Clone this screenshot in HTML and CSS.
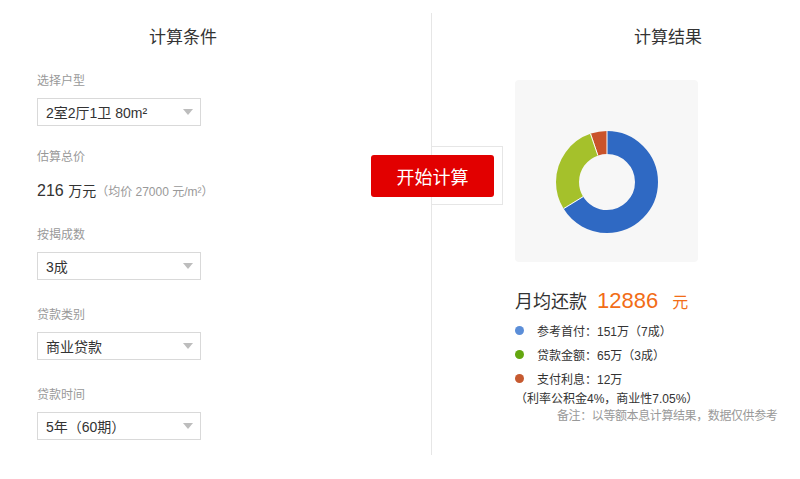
FILE: index.html
```html
<!DOCTYPE html>
<html lang="zh-CN">
<head>
<meta charset="utf-8">
<title>房贷计算</title>
<link rel="stylesheet" href="styles.css">
</head>
<body>
<div class="page">
  <section class="col left">
    <h2 class="title">计算条件</h2>
    <div class="field">
      <div class="label">选择户型</div>
      <div class="select"><span>2室2厅1卫 80m²</span><i class="arrow"></i></div>
    </div>
    <div class="field">
      <div class="label">估算总价</div>
      <div class="price"><span class="num">216</span> <span class="unit">万元</span><span class="avg">（均价 27000 元/m²）</span></div>
    </div>
    <div class="field f3">
      <div class="label">按揭成数</div>
      <div class="select"><span>3成</span><i class="arrow"></i></div>
    </div>
    <div class="field loose">
      <div class="label">贷款类别</div>
      <div class="select"><span>商业贷款</span><i class="arrow"></i></div>
    </div>
    <div class="field loose">
      <div class="label">贷款时间</div>
      <div class="select"><span>5年（60期）</span><i class="arrow"></i></div>
    </div>
  </section>
  <section class="col right">
    <h2 class="title rtitle">计算结果</h2>
    <div class="card">
      <svg class="donut" width="104" height="104" viewBox="0 0 104 104">
        <g transform="rotate(-90 52 52)" fill="none" stroke-width="23">
          <circle cx="52" cy="52" r="39.5" stroke="#2f69c3" stroke-dasharray="164.4 248.2"/>
          <circle cx="52" cy="52" r="39.5" stroke="#a5c12b" stroke-dasharray="70.75 248.2" stroke-dashoffset="-164.4"/>
          <circle cx="52" cy="52" r="39.5" stroke="#c9532b" stroke-dasharray="13.06 248.2" stroke-dashoffset="-235.15"/>
        </g>
        <g stroke="#ffffff" stroke-width="1">
          <line x1="52" y1="24" x2="52" y2="0.5"/>
          <line x1="28.15" y1="66.67" x2="8.56" y2="78.72"/>
          <line x1="42.91" y1="25.52" x2="35.44" y2="3.76"/>
        </g>
      </svg>
    </div>
    <div class="monthly"><span class="mlabel">月均还款</span><span class="mnum">12886</span><span class="munit">元</span></div>
    <ul class="legend">
      <li><i class="dot blue"></i>参考首付：151万（7成）</li>
      <li><i class="dot green"></i>贷款金额：65万（3成）</li>
      <li><i class="dot orange"></i>支付利息：12万</li>
    </ul>
    <div class="rate">（利率公积金4%，商业性7.05%）</div>
    <div class="note">备注：以等额本息计算结果，数据仅供参考</div>
  </section>
  <div class="calc-box"></div>
  <button class="calc-btn">开始计算</button>
</div>
</body>
</html>
```

FILE: styles.css
```css
html, body {
  margin: 0;
  padding: 0;
  background: #ffffff;
}
body {
  font-family: "Liberation Sans", "Noto Sans CJK SC", sans-serif;
  color: #333333;
}
.page {
  position: relative;
  display: flex;
  width: 800px;
  height: 479px;
  overflow: hidden;
}
.col {
  box-sizing: border-box;
}
.left {
  width: 432px;
  height: 442px;
  margin-top: 13px;
  padding: 13px 0 0 37px;
  border-right: 1px solid #e6e6e6;
}
.title {
  margin: 0;
  font-size: 17px;
  line-height: 24px;
  font-weight: normal;
  color: #333333;
}
.left .title {
  width: 292px;
  text-align: center;
}
.field {
  margin-top: 23px;
}
.field.f3 {
  margin-top: 24px;
}
.field.loose {
  margin-top: 27px;
}
.label {
  font-size: 12px;
  line-height: 16px;
  color: #999999;
  margin-bottom: 9px;
}
.select {
  box-sizing: border-box;
  width: 164px;
  height: 28px;
  border: 1px solid #d9d9d9;
  padding: 0 7px 0 8px;
  display: flex;
  align-items: center;
  justify-content: space-between;
  font-size: 14px;
  color: #333333;
  background: #ffffff;
}
.arrow {
  width: 0;
  height: 0;
  border-left: 5px solid transparent;
  border-right: 5px solid transparent;
  border-top: 6px solid #bdbdbd;
}
.price {
  margin-top: 14px;
  line-height: 24px;
  height: 24px;
}
.price .num {
  font-size: 16px;
  color: #333333;
}
.price .unit {
  font-size: 14px;
  color: #333333;
}
.price .avg {
  font-size: 12px;
  color: #999999;
}
.right {
  flex: 1;
  padding: 26px 0 0 83px;
}
.rtitle {
  margin-left: 119px;
}
.card {
  box-sizing: border-box;
  margin-top: 30px;
  width: 183px;
  height: 182px;
  padding-top: 21px;
  background: #f7f7f7;
  border-radius: 4px;
  display: flex;
  align-items: center;
  justify-content: center;
}
.donut {
  display: block;
}
.monthly {
  margin-top: 24px;
  height: 30px;
  line-height: 30px;
  display: flex;
  align-items: baseline;
  white-space: nowrap;
}
.mlabel {
  font-size: 18px;
  color: #333333;
}
.mnum {
  font-size: 22px;
  color: #f26d17;
  margin-left: 10px;
}
.munit {
  font-size: 16px;
  color: #f26d17;
  margin-left: 14px;
}
.legend {
  list-style: none;
  margin: 2px 0 0 0;
  padding: 0;
}
.legend li {
  display: flex;
  align-items: center;
  height: 24px;
  font-size: 12px;
  color: #333333;
  white-space: nowrap;
}
.dot {
  width: 9px;
  height: 9px;
  border-radius: 50%;
  margin-right: 13px;
  flex: none;
}
.dot.blue { background: #5b8ed8; }
.dot.green { background: #64a70f; }
.dot.orange { background: #c65a30; }
.rate {
  font-size: 12px;
  line-height: 18px;
  color: #333333;
  white-space: nowrap;
}
.note {
  font-size: 12px;
  line-height: 16px;
  letter-spacing: -0.4px;
  color: #999999;
  margin-left: 42px;
  white-space: nowrap;
}
.calc-box {
  position: absolute;
  left: 431px;
  top: 146px;
  width: 72px;
  height: 59px;
  box-sizing: border-box;
  border: 1px solid #e6e6e6;
  background: #ffffff;
}
.calc-btn {
  position: absolute;
  left: 371px;
  top: 155px;
  width: 123px;
  height: 42px;
  border: none;
  border-radius: 3px;
  background: #e20000;
  color: #ffffff;
  font-family: "Noto Sans CJK SC", sans-serif;
  font-size: 18px;
  padding: 0;
  cursor: pointer;
}
```
